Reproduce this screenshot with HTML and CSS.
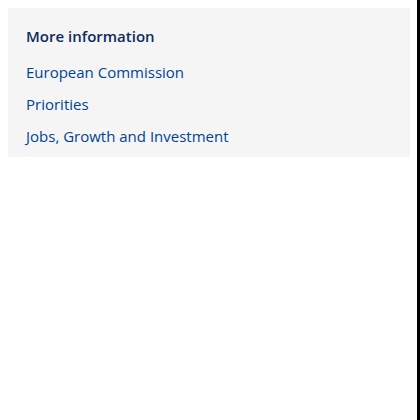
FILE: index.html
```html
<!DOCTYPE html>
<html>
<head>
<meta charset="utf-8">
<link rel="stylesheet" href="styles.css">
</head>
<body>
<aside class="info">
  <h2 class="info-title">More information</h2>
  <ul class="info-list">
    <li><a href="#">European Commission</a></li>
    <li><a href="#">Priorities</a></li>
    <li><a href="#">Jobs, Growth and Investment</a></li>
  </ul>
</aside>
</body>
</html>
```
FILE: styles.css
```css
html {
  background: #000;
}
body {
  margin: 0;
  padding: 8px;
  width: 417px;
  min-height: 420px;
  box-sizing: border-box;
  background: #fff;
  font-family: "Open Sans", "Liberation Sans", sans-serif;
}
.info {
  width: 402px;
  box-sizing: border-box;
  background: #f5f5f5;
  padding: 16px 18px 5px;
}
.info-title {
  margin: 0 0 8px;
  font-size: 15px;
  line-height: 24px;
  font-weight: 600;
  color: #0e2c5a;
}
.info-list {
  list-style: none;
  margin: 0;
  padding: 0;
}
.info-list li {
  height: 32px;
  display: flex;
  align-items: center;
}
.info-list a {
  font-size: 15px;
  line-height: 24px;
  color: #004494;
  text-decoration: none;
}
```
